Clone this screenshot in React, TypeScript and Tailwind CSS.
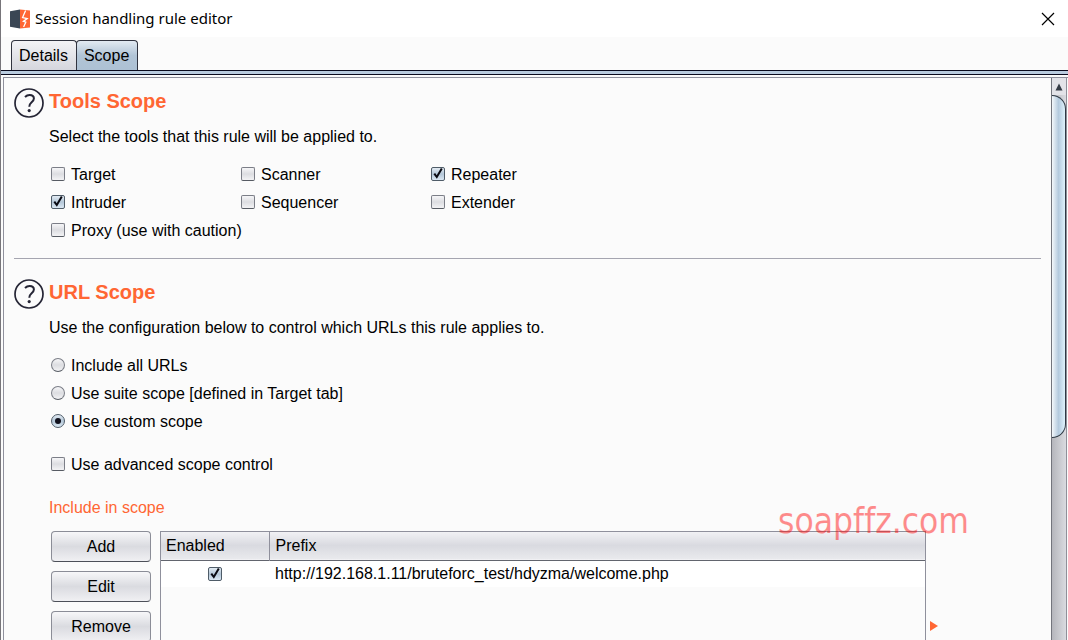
import { useId, useState } from "react";
import type { ReactNode } from "react";

interface OptionProps {
  type: "checkbox" | "radio";
  label: string;
  name?: string;
  defaultChecked?: boolean;
  hideLabel?: boolean;
}

const TOOLS = [
  { label: "Target", checked: false },
  { label: "Scanner", checked: false },
  { label: "Repeater", checked: true },
  { label: "Intruder", checked: true },
  { label: "Sequencer", checked: false },
  { label: "Extender", checked: false },
  { label: "Proxy (use with caution)", checked: false },
];

const URL_SCOPES = [
  "Include all URLs",
  "Use suite scope [defined in Target tab]",
  "Use custom scope",
];

const PREFIXES = ["http://192.168.1.11/bruteforc_test/hdyzma/welcome.php"];

const Option: React.FC<OptionProps> = ({
  type,
  label,
  name,
  defaultChecked,
  hideLabel,
}) => {
  const id = useId();
  const shape = type === "radio" ? "rounded-full" : "rounded-[2px]";

  return (
    <div className="flex h-7 items-center gap-1.5 whitespace-nowrap">
      <span className="relative flex size-3.5 shrink-0">
        <input
          id={id}
          type={type}
          name={name}
          defaultChecked={defaultChecked}
          aria-label={hideLabel ? label : undefined}
          className={`peer size-3.5 appearance-none border border-[#7b7e87] border-b-[#565b63] bg-linear-to-b from-[#f6f6f8] via-[#dcdde1] to-[#f3f3f5] checked:border-[#4f5c68] checked:from-[#e3ebf3] checked:via-[#b4c7d8] checked:to-[#dbe8f3] ${shape}`}
        />
        {type === "checkbox" ? (
          <svg
            viewBox="0 0 14 14"
            className="pointer-events-none absolute inset-0 hidden peer-checked:block"
          >
            <path
              d="M3.3 6.6 L5.8 10 L10.8 1.4"
              fill="none"
              stroke="#0a0a12"
              strokeWidth="2"
            />
          </svg>
        ) : (
          <svg
            viewBox="0 0 14 14"
            className="pointer-events-none absolute inset-0 hidden peer-checked:block"
          >
            <circle cx="7" cy="7" r="3" fill="#10101c" />
          </svg>
        )}
      </span>
      {!hideLabel && (
        <label htmlFor={id} className="pt-0.5">
          {label}
        </label>
      )}
    </div>
  );
};

const Section: React.FC<{
  title: string;
  description: string;
  children: ReactNode;
}> = ({ title, description, children }) => (
  <section className="flex gap-[5px]">
    <button
      type="button"
      aria-label={`Help for ${title}`}
      className="size-[30px] shrink-0"
    >
      <svg viewBox="0 0 30 30" fill="none" stroke="#252535" className="size-full">
        <circle cx="15" cy="15" r="14" strokeWidth="1.7" />
        <path
          d="M11 9 C12.5 7.5 14 7 15.6 7 C18.2 7 19.9 8.3 19.9 10.5 C19.9 12.4 18.8 13.4 17.4 14.6 C15.9 15.9 15.3 16.7 15.3 18.8"
          strokeWidth="2"
        />
        <circle cx="15.2" cy="22.6" r="1.6" fill="#252535" stroke="none" />
      </svg>
    </button>
    <div className="min-w-0 flex-1">
      <h2 className="text-xl leading-[26px] font-bold text-[#ff6633]">{title}</h2>
      <p className="my-[11px]">{description}</p>
      {children}
    </div>
  </section>
);

const ActionButton: React.FC<{ children: ReactNode }> = ({ children }) => (
  <button
    type="button"
    className="h-[31px] w-[100px] rounded-[4px] border border-[#8b8d97] border-b-[#4d5059] bg-linear-to-b from-[#f7f7f9] via-[#dadbe0] to-[#f0f0f3]"
  >
    {children}
  </button>
);

const Scrollbar: React.FC = () => (
  <div className="mr-px flex w-4 shrink-0 flex-col border-x border-[#8f9099] border-l-[#73757d] bg-linear-to-r from-[#b5b6bc] to-[#dadbe0]">
    <button
      type="button"
      aria-label="Scroll up"
      className="flex h-[17px] shrink-0 items-center justify-center bg-[#e3e3e8]"
    >
      <svg viewBox="0 0 8 8" className="size-2">
        <path d="M4 0.5 L7.5 7.5 H0.5 Z" fill="#343b45" />
      </svg>
    </button>
    <div className="min-h-0 flex-1">
      <div className="h-[63%] rounded-r-[14px] border border-l-0 border-[#2f3a45] bg-linear-to-r from-[#f4f8fb] via-[#b4cade] to-[#dff2fc]" />
    </div>
  </div>
);

const ScopeTable: React.FC = () => (
  <div className="min-w-0 flex-1 border border-[#8f909c] border-b-0">
    <table className="w-full table-fixed border-collapse text-left">
      <thead>
        <tr className="h-7 border-b border-[#62656e] bg-linear-to-b from-[#f1f1f4] via-[#d9dae0] to-[#e9eaed]">
          <th className="w-[108px] border-r border-[#8f909c] px-[5px] font-normal">
            Enabled
          </th>
          <th className="px-1.5 font-normal">Prefix</th>
        </tr>
      </thead>
      <tbody>
        {PREFIXES.map((prefix) => (
          <tr key={prefix} className="h-[26px] bg-white">
            <td className="p-0">
              <div className="flex h-[26px] items-center justify-center">
                <Option
                  type="checkbox"
                  label={`Enable ${prefix}`}
                  defaultChecked
                  hideLabel
                />
              </div>
            </td>
            <td className="truncate px-1.5 py-0">{prefix}</td>
          </tr>
        ))}
      </tbody>
    </table>
  </div>
);

const TitleBar: React.FC = () => (
  <header className="flex h-[37px] shrink-0 items-center bg-white pr-[13px] pl-[9px]">
    <svg viewBox="0 0 20 20" className="size-5">
      <path d="M0 2.2 L10 0.5 V19.5 L0 17.8 Z" fill="#3a4654" />
      <path d="M10 0.5 L20 1.5 V18.5 L10 19.5 Z" fill="#ff6633" />
      <path
        d="M15.6 1.5 L12.6 8.6 L17.2 9.6 L13.4 12.4 L15.8 13.2 L13.6 18"
        fill="none"
        stroke="#fff"
        strokeWidth="1.3"
      />
    </svg>
    <h1 className="ml-[5px] flex-1 pb-0.5 font-['Noto_Sans',sans-serif] text-[15px]">
      Session handling rule editor
    </h1>
    <button type="button" aria-label="Close">
      <svg viewBox="0 0 14 14" className="size-3.5">
        <path d="M1 1 L13 13 M13 1 L1 13" stroke="#000" strokeWidth="1.2" />
      </svg>
    </button>
  </header>
);

const TABS = ["Details", "Scope"];

const App: React.FC = () => {
  const [tab, setTab] = useState("Scope");

  return (
    <div className="relative flex h-screen flex-col overflow-hidden border-l border-[#77757a] bg-[#fbfbfb] font-['Liberation_Sans',Arial,sans-serif] text-base leading-6 text-black">
      <TitleBar />

      <nav role="tablist" className="flex shrink-0 pt-[3px] pl-2.5">
        {TABS.map((item) => (
          <button
            key={item}
            type="button"
            role="tab"
            aria-selected={item === tab}
            onClick={() => setTab(item)}
            className="-mr-px h-[30px] rounded-t-[4px] border border-b-0 border-[#30333f] bg-linear-to-b from-[#f3f3f6] to-[#d5d6dd] pr-2 pl-[7px] aria-selected:from-[#e2eaf2] aria-selected:via-[#b1c4d6] aria-selected:to-[#adc1d4]"
          >
            {item}
          </button>
        ))}
      </nav>
      <div className="h-[5px] shrink-0 border-y border-[#0a0a1c] bg-[#b9cbde]" />

      <div className="mt-0.5 ml-0.5 flex min-h-0 flex-1 border-t border-l border-[#8f909c]">
        <main className="min-w-0 flex-1 overflow-hidden p-2.5">
          <Section
            title="Tools Scope"
            description="Select the tools that this rule will be applied to."
          >
            <div className="ml-0.5 grid grid-cols-[190px_190px_190px]">
              {TOOLS.map(({ label, checked }) => (
                <Option
                  key={label}
                  type="checkbox"
                  label={label}
                  defaultChecked={checked}
                />
              ))}
            </div>
          </Section>

          <hr className="mt-3.5 mb-5 border-[#a5a5b0]" />

          <Section
            title="URL Scope"
            description="Use the configuration below to control which URLs this rule applies to."
          >
            <div className="ml-0.5">
              {URL_SCOPES.map((scope) => (
                <Option
                  key={scope}
                  type="radio"
                  name="url-scope"
                  label={scope}
                  defaultChecked={scope === "Use custom scope"}
                />
              ))}
            </div>
            <div className="mt-[15px] ml-0.5">
              <Option type="checkbox" label="Use advanced scope control" />
            </div>

            <h3 className="mt-[18px] text-[#ff6633]">Include in scope</h3>
            <div className="mt-[11px] ml-0.5 flex h-60 pr-[103px]">
              <div className="mr-[9px] flex flex-col gap-[9px]">
                <ActionButton>Add</ActionButton>
                <ActionButton>Edit</ActionButton>
                <ActionButton>Remove</ActionButton>
              </div>
              <ScopeTable />
              <button
                type="button"
                aria-label="Expand"
                className="mt-[90px] ml-1 h-2.5 w-2"
              >
                <svg viewBox="0 0 8 10" className="size-full">
                  <path d="M0 0 L8 5 L0 10 Z" fill="#ff6633" />
                </svg>
              </button>
            </div>
          </Section>
        </main>
        <Scrollbar />
      </div>

      <span className="pointer-events-none absolute top-[499px] right-[99px] font-['DejaVu_Sans_Condensed','DejaVu_Sans',sans-serif] text-[35px] leading-[44px] text-[#ff0000]/45 [font-variant-ligatures:none]">
        soapffz.com
      </span>
    </div>
  );
};

export default App;
